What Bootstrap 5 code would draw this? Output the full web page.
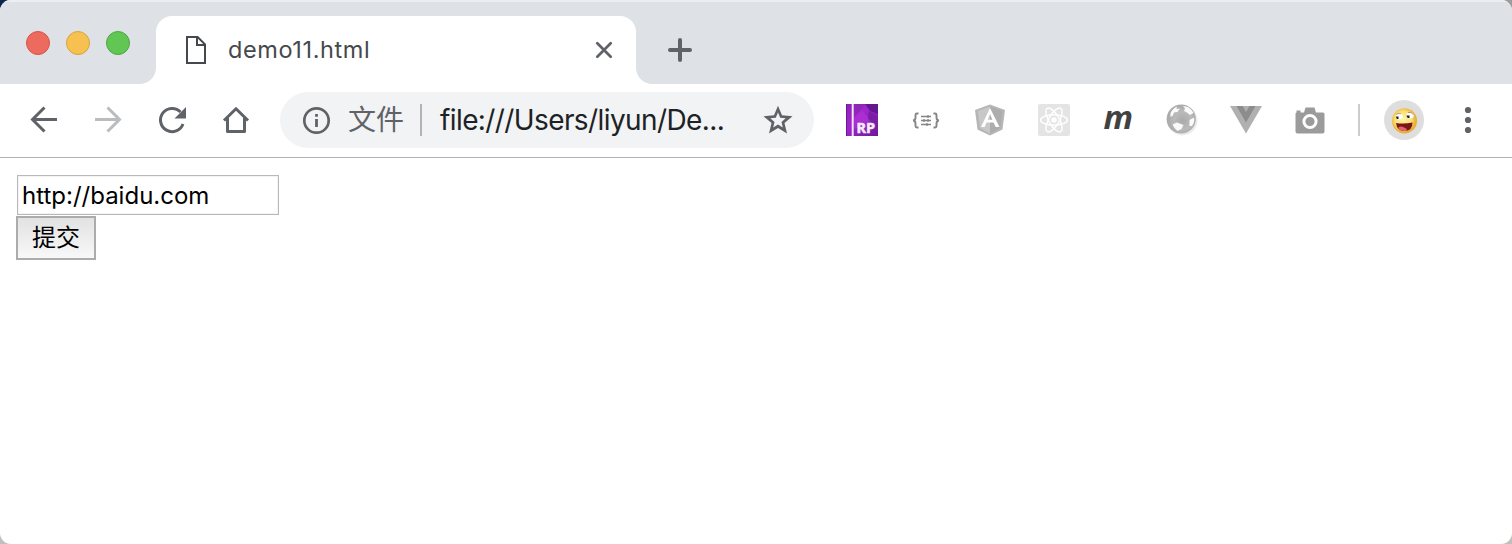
<!DOCTYPE html>
<html lang="zh-CN">
<head>
<meta charset="utf-8">
<title>demo11.html</title>
<link href="https://cdn.jsdelivr.net/npm/bootstrap@5.3.0/dist/css/bootstrap.min.css" rel="stylesheet">
<style>
body{font-family:Inter,"Noto Sans CJK SC",sans-serif;background:linear-gradient(90deg,#10254d 0 50%,#9a9b9b 50%) top/100% 40px no-repeat,#bfc0bd;height:544px;overflow:hidden}
.window{height:544px;border-radius:11px;overflow:hidden;background:#fff}
.tabstrip{height:84px;background:#dee1e6;box-shadow:inset 0 2px 0 #eceef1;padding-top:16px}
.lights{width:156px;padding:15px 0 0 26px;gap:16px;height:68px}
.light{width:24px;height:24px;border-radius:50%;border:1px solid}
.red{background:#ed6a5f;border-color:#da5347}
.yellow{background:#f6c151;border-color:#d9a33c}
.green{background:#62c655;border-color:#4ba73e}
.tab{width:480px;height:68px;background:#fff;border-radius:16px 16px 0 0;padding:0 20px 0 28px}
.tab:before,.tab:after{content:"";position:absolute;bottom:0;width:16px;height:16px}
.tab:before{left:-16px;background:radial-gradient(circle at 0 0,#dee1e6 15.5px,#fff 16.2px)}
.tab:after{right:-16px;background:radial-gradient(circle at 100% 0,#dee1e6 15.5px,#fff 16.2px)}
.newtab{margin-left:28px;height:68px}
.tabtitle{font-size:23.5px;line-height:32px;color:#45494d;margin-left:20px;letter-spacing:.6px;font-feature-settings:"calt" 0}
.toolbar{height:74px;padding:0 12px 2px;border-bottom:1px solid #b1b1b3}
.cell{width:64px;height:40px;flex:none}
.omnibox{width:534px;height:56px;border-radius:28px;background:#f1f3f4;margin:0 16px 0 12px;padding:0 20px;flex:none}
.scheme{font-size:28px;line-height:40px;color:#5f6368;margin-left:16px;width:56px;padding-top:1px}
.bar{width:2px;height:32px;background:#b1b4b7;margin:0 18px 0 16px}
.address{font-size:28px;line-height:40px;color:#202124;letter-spacing:-.6px;padding-top:1px}
.split{width:2px;height:32px;background:#ccc;margin:0 24px 0 16px}
.avatar{width:40px;height:40px;border-radius:50%;background:#dedede;margin-right:12px}
.page{padding:17px 16px}
.urlfield{width:262px;height:40px;margin-left:1px;padding:0 4px;border:1px solid #b9b9b9;box-shadow:inset 0 0 0 1px #f3f3f3;font-size:24px;color:#000;background:#fff;outline:0;font-family:inherit;letter-spacing:0}
.submit{width:80px;height:44px;margin-top:1px;border:2px solid #acacac;border-radius:0;background:linear-gradient(#e2e2e2,#f8f8f8);font-size:24px;line-height:38px;padding:0;color:#000}
.ic{fill:none;stroke:#5f6368;stroke-width:3}
.dim{stroke:#babcbe}
svg text{font-family:"Open Sans",sans-serif}
.tall{overflow:visible}
</style>
</head>
<body>
<div class="window d-flex flex-column">
  <header class="tabstrip d-flex">
    <div class="lights d-flex"><i class="light red"></i><i class="light yellow"></i><i class="light green"></i></div>
    <div class="tab position-relative d-flex align-items-center">
      <svg width="24" height="32" viewBox="0 0 24 32" fill="none" stroke="#45484c" stroke-width="2"><path d="M3 3H13.6L21 10.400V29H3Z M13 3V11H21"/></svg>
      <span class="tabtitle">demo11.html</span>
      <svg class="ms-auto" width="24" height="24" viewBox="0 0 24 24" stroke="#5f6368" stroke-width="2.700" stroke-linecap="round"><path d="M5.300 5.300 18.700 18.700M18.700 5.300 5.300 18.700"/></svg>
    </div>
    <div class="newtab d-flex align-items-center">
      <svg width="32" height="32" viewBox="0 0 32 32" stroke="#5f6368" stroke-width="4" stroke-linecap="round"><path d="M6 16H26M16 6V26"/></svg>
    </div>
  </header>

  <nav class="toolbar d-flex align-items-center flex-shrink-0">
    <svg class="cell ic" viewBox="0 0 64 40"><path d="M45 19.500H21M32.500 7.500 20.500 19.500 32.500 31.500"/></svg>
    <svg class="cell ic dim" viewBox="0 0 64 40"><path d="M19 19.500H43M31.500 7.500 43.500 19.500 31.500 31.500"/></svg>
    <svg class="cell ic" viewBox="0 0 64 40"><path d="M43 24A11.600 11.600 0 1 1 40.500 12"/><path d="M46 7V18.500H34.500Z" fill="#5f6368" stroke="none"/></svg>
    <svg class="cell ic" viewBox="0 0 64 40"><path d="M20 20.500 32 8.700 44 20.500M23.500 18V31.500H40.500V18" stroke-linejoin="round"/></svg>

    <div class="omnibox d-flex align-items-center">
      <svg width="32" height="32" viewBox="0 0 32 32"><circle cx="16.500" cy="16.500" r="12.200" fill="none" stroke="#5f6368" stroke-width="2.700"/><path d="M15.100 10H17.900V12.800H15.100ZM15.100 15H17.900V23H15.100Z" fill="#5f6368"/></svg>
      <span class="scheme">文件</span>
      <span class="bar"></span>
      <span class="address">file:///Users/liyun/De...</span>
      <svg class="ms-auto" width="32" height="32" viewBox="0 0 32 32"><path fill="#5f6368" fill-rule="evenodd" d="M16 1.700 20 11.300 30.500 12.200 22.500 19.100 25 29.500 16 24 7 29.500 9.500 19.100 1.500 12.200 12 11.300ZM16 8.500 13.800 13.700 8.300 14.200 12.500 17.900 11.200 23.500 16 20.500 20.800 23.500 19.500 17.900 23.700 14.200 18.200 13.700Z"/></svg>
    </div>

    <svg class="cell" viewBox="0 0 64 40">
      <defs><linearGradient id="rp" x1="0" y1="0" x2="1" y2="1"><stop stop-color="#8c22b4"/><stop offset=".4" stop-color="#a126ce"/><stop offset="1" stop-color="#6b1997"/></linearGradient></defs>
      <path fill="url(#rp)" d="M16 4H48V36H16Z"/><path fill="#64188f" d="M35 4H48V14L40 11Z"/><path fill="#8c28b4" d="M24 4H35L25 16Z"/><path fill="#ab2ed2" d="M24 18 32 10 40 20 30 27 24 29Z"/><path fill="#7a1ea4" d="M39 11 48 17V25L38 19Z"/>
      <path fill="#f0e4f6" d="M21.700 4H23.700V36H21.700Z"/><path fill="#6a1696" d="M16 4H17V36H16Z"/>
      <g fill="none" stroke="#f5eafa" stroke-width=".6"><text x="26.500" y="32.500" font-size="14.500" font-weight="700" fill="#f5eafa" textLength="18.500" lengthAdjust="spacingAndGlyphs">RP</text></g>
    </svg>
    <svg class="cell" viewBox="0 0 64 40" fill="none" stroke="#858585" stroke-width="1.900"><path d="M24.500 13.500H23Q21.500 13.500 21.500 15V17.500Q21.500 20.500 19 20.500 21.500 20.500 21.500 23.500V26Q21.500 27.500 23 27.500H24.500M39.500 13.500H41Q42.500 13.500 42.500 15V17.500Q42.500 20.500 45 20.500 42.500 20.500 42.500 23.500V26Q42.500 27.500 41 27.500H39.500"/><path stroke-width="1.300" d="M27 16.500H37M27 20.500H37M27 24.500H37M34 15V18M30 19V22M34 19V22M33 23V26"/></svg>
    <svg class="cell" viewBox="0 0 64 40"><path fill="#b6b6b6" d="M32 4.500 47 10 44.500 29.500 32 35.500 19.500 29.500 17 10Z"/><path fill="#c8c8c8" d="M32 6.500 20 11 22 28 32 33.500Z"/><path fill="#adadad" d="M32 6.500 44.500 11 42.300 28 32 33.500Z"/><path fill="#fff" fill-rule="evenodd" d="M32 8 41.500 27H37.700L35.500 22.500H28.500L26.600 27H23ZM32 14 29.700 19.800H34.300Z"/></svg>
    <svg class="cell" viewBox="0 0 64 40"><rect x="16" y="4" width="32" height="32" rx="2" fill="#e4e4e4"/><g fill="none" stroke="#fff" stroke-width="1.400"><ellipse cx="32" cy="20" rx="13.500" ry="5.200"/><ellipse cx="32" cy="20" rx="13.500" ry="5.200" transform="rotate(60 32 20)"/><ellipse cx="32" cy="20" rx="13.500" ry="5.200" transform="rotate(120 32 20)"/></g><circle cx="32" cy="20" r="2.800" fill="#fff"/></svg>
    <svg class="cell tall" viewBox="0 0 64 40"><text x="17.500" y="28.800" font-size="33" font-weight="700" font-style="italic" fill="#414141" textLength="29.500" lengthAdjust="spacingAndGlyphs">m</text></svg>
    <svg class="cell" viewBox="0 0 64 40"><defs><radialGradient id="globe" cx=".55" cy=".55"><stop stop-color="#aaa"/><stop offset=".6" stop-color="#bababa"/><stop offset="1" stop-color="#ababab"/></radialGradient></defs><circle cx="32.500" cy="20.500" r="15" fill="#ececec"/><circle cx="31.200" cy="19" r="14.600" fill="url(#globe)"/><path fill="#fafafa" d="M20.500 13Q23 8 27 6.500L26.500 9 30 8.500 27.500 12 24 12.500 23 15.500 20.500 17ZM33 6 38 7Q42.500 10 43.500 13L40 15 37 12.500 34 11 35 8.500ZM22.500 24.500 27 22.500 33.500 25 31.500 29 27.500 31Q24 28.500 22.500 24.500ZM39.500 20 44 17.500Q45 22 42 26L39.500 26Z"/></svg>
    <svg class="cell" viewBox="0 0 64 40"><path fill="#b0b0b0" d="M16 6H48L32 33.500Z"/><path fill="#8c8c8c" d="M22.500 6H28.800L32 12 35.500 6H41.500L32 22.500Z"/></svg>
    <svg class="cell" viewBox="0 0 64 40"><path fill="#9b9b9b" d="M18.500 12.500V10.500H22.500V12.500H26L27.500 7.500H36.500L38 12.500H45Q46.500 12.500 46.500 14V31.500Q46.500 33.500 44.500 33.500H19.500Q17.500 33.500 17.500 31.500V14Q17.500 12.500 18.500 12.500Z"/><circle cx="32" cy="21.500" r="6.100" fill="#9b9b9b" stroke="#fff" stroke-width="3"/></svg>

    <span class="split"></span>
    <svg class="avatar flex-shrink-0" viewBox="0 0 40 40">
      <defs><radialGradient id="face" cx=".45" cy=".45"><stop stop-color="#fff4a5"/><stop offset=".65" stop-color="#fbdf76"/><stop offset="1" stop-color="#e8af38"/></radialGradient></defs>
      <circle cx="20.500" cy="20.800" r="12.600" fill="url(#face)"/>
      <ellipse cx="15.300" cy="16.500" rx="3.500" ry="3" fill="#fff"/><ellipse cx="26" cy="15.500" rx="3.700" ry="3" fill="#fff"/>
      <path fill="#1e1e1e" d="M12 16.500H14.500V19H13Q12 18 12 16.500ZM22.500 15.500H25.500V18H24Q22.500 17 22.500 15.500Z"/>
      <path d="M12 14.500Q14 12.800 17 13.700M24 12.500Q27 11.500 29.500 14.500" fill="none" stroke="#a87a2c" stroke-width=".7"/>
      <path fill="#781716" d="M12 23Q20 24.300 28.500 22.500 28.500 31 20.500 31 13 31 12 23Z"/><path fill="#e0626c" d="M14 28Q16.500 25.500 19.500 27.300 22 28 23.500 30.300 22 31 20.500 31 16 31 14 28Z"/>
    </svg>
    <svg class="cell" viewBox="0 0 64 40" fill="#5f6368"><circle cx="32" cy="10" r="3.100"/><circle cx="32" cy="20" r="3.100"/><circle cx="32" cy="30" r="3.100"/></svg>
  </nav>

  <main class="page d-flex flex-column align-items-start">
    <input class="urlfield" type="text" value="http://baidu.com">
    <button class="submit btn" type="button">提交</button>
  </main>
</div>
<script src="https://cdn.jsdelivr.net/npm/bootstrap@5.3.0/dist/js/bootstrap.bundle.min.js"></script>
</body>
</html>
